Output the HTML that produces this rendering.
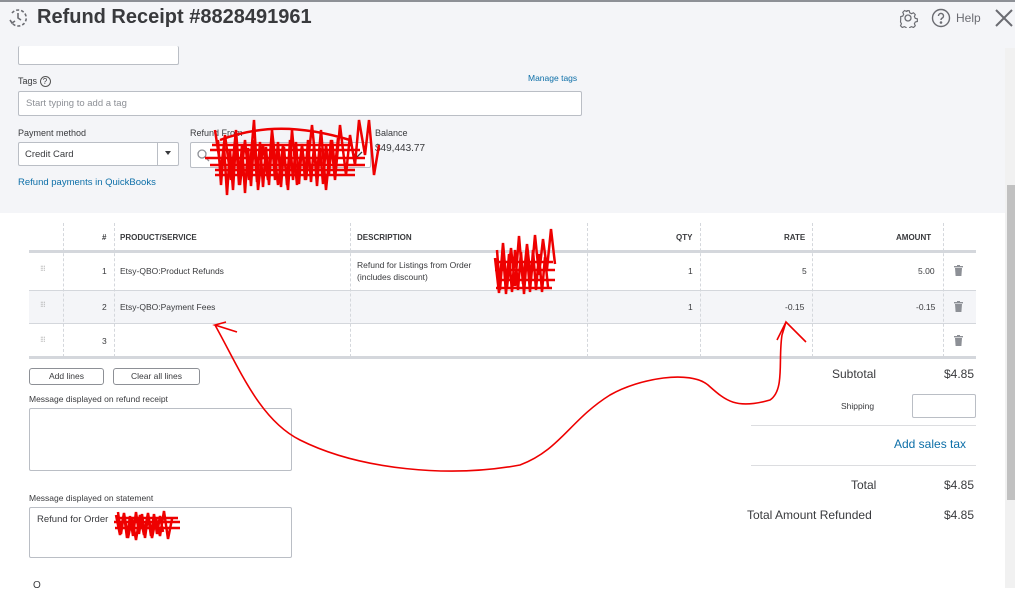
<!DOCTYPE html>
<html><head><meta charset="utf-8"><style>
*{box-sizing:border-box;margin:0;padding:0}
body{width:1015px;height:588px;overflow:hidden;background:#fff;font-family:"Liberation Sans",Arial,sans-serif;color:#393a3d;position:relative}
.a{position:absolute}
.top{left:0;top:0;width:1015px;height:213px;background:#f4f5f8;border-top:2px solid #8d9096}
.inp{background:#fff;border:1px solid #babec5;border-radius:2px}
.lbl{font-size:9px;color:#393a3d}
.hdr{font-size:8px;font-weight:bold;color:#393a3d;top:233px}
.cell{font-size:8.5px;color:#393a3d}
.vl{width:0;border-left:1px dashed #d4d7dc}
.hl{height:0;left:29px;width:947px}
.btn{border:1px solid #8d9096;border-radius:3px;background:#fff;font-size:8.5px;text-align:center;line-height:15px;height:17px;top:368px}
.tr{font-size:12px;color:#393a3d}
.trash{width:9px;height:11px}
</style></head><body>
<div class="a top"></div>
<svg class="a" style="left:8px;top:8px" width="20" height="20" viewBox="0 0 20 20" fill="none" stroke="#6b6c72" stroke-width="1.6"><path d="M4 5 A8 8 0 1 1 4 15" stroke-dasharray="3 2"/><path d="M10 5v5l3 2"/><path d="M2 12l2 3 3-2"/></svg>
<div class="a" style="left:37px;top:6px;font-size:20px;font-weight:bold;color:#393a3d">Refund Receipt #8828491961</div>
<svg class="a" style="left:898px;top:8px" width="20" height="20" viewBox="0 0 20 20" fill="none" stroke="#6b6c72" stroke-width="1.3"><circle cx="10" cy="10" r="3"/><path d="M8.5 2h3l.5 2.3 2 1 2.2-1 2 2-1 2.2 1 2 2.3.5v3l-2.3.5-1 2 1 2.2-2 2-2.2-1-2 1-.5 2.3h-3l-.5-2.3-2-1-2.2 1-2-2 1-2.2-1-2L2 11.5v-3l2.3-.5 1-2-1-2.2 2-2 2.2 1 2-1z" transform="scale(.9) translate(1 1)"/></svg>
<svg class="a" style="left:931px;top:8px" width="20" height="20" viewBox="0 0 20 20" fill="none" stroke="#6b6c72" stroke-width="1.4"><circle cx="10" cy="10" r="8.5"/><path d="M7.5 8a2.5 2.5 0 1 1 3.5 2.2c-.8.4-1 .9-1 1.8"/><circle cx="10" cy="14.5" r=".6" fill="#6b6c72"/></svg>
<div class="a" style="left:956px;top:11px;font-size:12px;color:#6b6c72">Help</div>
<svg class="a" style="left:994px;top:8px" width="20" height="20" viewBox="0 0 20 20" stroke="#6b6c72" stroke-width="2"><path d="M2 2l16 16M18 2L2 18"/></svg>
<div class="a" style="left:1005px;top:48px;width:10px;height:540px;background:#f1f1f1"></div>
<div class="a" style="left:1007px;top:185px;width:8px;height:315px;background:#c1c1c1"></div>
<div class="a inp" style="left:18px;top:46px;width:161px;height:19px;border-top:none"></div>
<div class="a lbl" style="left:18px;top:76px">Tags <span style="display:inline-block;width:11px;height:11px;border:1px solid #555;border-radius:50%;font-size:8px;text-align:center;line-height:9px">?</span></div>
<div class="a" style="left:528px;top:73px;font-size:8.5px;color:#0d6fa8">Manage tags</div>
<div class="a inp" style="left:18px;top:91px;width:564px;height:25px;font-size:9.5px;color:#8d9096;padding:6px 7px">Start typing to add a tag</div>
<div class="a lbl" style="left:18px;top:128px">Payment method</div>
<div class="a inp" style="left:18px;top:142px;width:161px;height:24px;font-size:9.5px;padding:6px 6px">Credit Card</div>
<div class="a" style="left:157px;top:143px;width:1px;height:22px;background:#babec5"></div>
<div class="a" style="left:165px;top:151px;border:3px solid transparent;border-top:4px solid #393a3d"></div>
<div class="a lbl" style="left:190px;top:128px">Refund From</div>
<div class="a inp" style="left:190px;top:142px;width:181px;height:26px"></div>
<svg class="a" style="left:196px;top:148px" width="14" height="14" fill="none" stroke="#8d9096" stroke-width="1.3"><circle cx="6" cy="6" r="4"/><path d="M9 9l4 4"/></svg>
<svg class="a" style="left:350px;top:150px" width="14" height="10" fill="none" stroke="#393a3d" stroke-width="1.3"><path d="M2 2l5 5 5-5"/></svg>
<div class="a lbl" style="left:375px;top:128px">Balance</div>
<div class="a" style="left:375px;top:143px;font-size:10px;color:#393a3d">$49,443.77</div>
<div class="a" style="left:18px;top:177px;font-size:9.5px;color:#0d6fa8">Refund payments in QuickBooks</div>
<div class="a hdr" style="left:102px">#</div>
<div class="a hdr" style="left:120px">PRODUCT/SERVICE</div>
<div class="a hdr" style="left:357px">DESCRIPTION</div>
<div class="a hdr" style="left:676px">QTY</div>
<div class="a hdr" style="left:784px">RATE</div>
<div class="a hdr" style="left:896px">AMOUNT</div>
<div class="a" style="left:29px;top:291px;width:947px;height:32px;background:#f4f5f8"></div>
<div class="a hl" style="top:250px;border-top:3px solid #d4d7dc"></div>
<div class="a hl" style="top:290px;border-top:1px solid #d4d7dc"></div>
<div class="a hl" style="top:323px;border-top:1px solid #d4d7dc"></div>
<div class="a hl" style="top:356px;border-top:3px solid #d4d7dc"></div>
<div class="a vl" style="left:63px;top:223px;height:134px"></div>
<div class="a vl" style="left:114px;top:223px;height:134px"></div>
<div class="a vl" style="left:350px;top:223px;height:134px"></div>
<div class="a vl" style="left:587px;top:223px;height:134px"></div>
<div class="a vl" style="left:700px;top:223px;height:134px"></div>
<div class="a vl" style="left:812px;top:223px;height:134px"></div>
<div class="a vl" style="left:943px;top:223px;height:134px"></div>
<div class="a cell" style="left:40px;top:264px;color:#aaa;font-size:8px;letter-spacing:-1px">⁝⁝⁝</div>
<div class="a cell" style="left:40px;top:300px;color:#aaa;font-size:8px;letter-spacing:-1px">⁝⁝⁝</div>
<div class="a cell" style="left:40px;top:335px;color:#aaa;font-size:8px;letter-spacing:-1px">⁝⁝⁝</div>
<div class="a cell" style="left:102px;top:266px">1</div>
<div class="a cell" style="left:120px;top:266px">Etsy-QBO:Product Refunds</div>
<div class="a cell" style="left:357px;top:259px;line-height:12px">Refund for Listings from Order<br>(includes discount)</div>
<div class="a cell" style="left:688px;top:266px">1</div>
<div class="a cell" style="left:802px;top:266px">5</div>
<div class="a cell" style="left:918px;top:266px">5.00</div>
<div class="a cell" style="left:102px;top:302px">2</div>
<div class="a cell" style="left:120px;top:302px">Etsy-QBO:Payment Fees</div>
<div class="a cell" style="left:688px;top:302px">1</div>
<div class="a cell" style="left:785px;top:302px">-0.15</div>
<div class="a cell" style="left:916px;top:302px">-0.15</div>
<div class="a cell" style="left:102px;top:336px">3</div>
<svg class="a trash" style="left:954px;top:265px" viewBox="0 0 9 11" fill="#8d9096"><rect x="0" y="1" width="9" height="1.4"/><rect x="3" y="0" width="3" height="1.2"/><path d="M1 3h7l-.6 8H1.6z"/></svg>
<svg class="a trash" style="left:954px;top:301px" viewBox="0 0 9 11" fill="#8d9096"><rect x="0" y="1" width="9" height="1.4"/><rect x="3" y="0" width="3" height="1.2"/><path d="M1 3h7l-.6 8H1.6z"/></svg>
<svg class="a trash" style="left:954px;top:335px" viewBox="0 0 9 11" fill="#8d9096"><rect x="0" y="1" width="9" height="1.4"/><rect x="3" y="0" width="3" height="1.2"/><path d="M1 3h7l-.6 8H1.6z"/></svg>
<div class="a btn" style="left:29px;width:75px">Add lines</div>
<div class="a btn" style="left:113px;width:87px">Clear all lines</div>
<div class="a lbl" style="left:29px;top:394px;font-size:8.5px">Message displayed on refund receipt</div>
<div class="a inp" style="left:29px;top:408px;width:263px;height:63px"></div>
<div class="a lbl" style="left:29px;top:493px;font-size:8.5px">Message displayed on statement</div>
<div class="a inp" style="left:29px;top:507px;width:263px;height:51px;font-size:9.5px;padding:6px 7px">Refund for Order</div>
<div class="a" style="left:33px;top:580px;font-size:10px">O</div>
<div class="a tr" style="left:832px;top:367px">Subtotal</div>
<div class="a tr" style="left:944px;top:367px">$4.85</div>
<div class="a" style="left:841px;top:401px;font-size:8.5px">Shipping</div>
<div class="a inp" style="left:912px;top:394px;width:64px;height:24px"></div>
<div class="a" style="left:751px;top:425px;width:225px;height:1px;background:#dcdde0"></div>
<div class="a" style="left:894px;top:437px;font-size:12px;color:#0d6fa8">Add sales tax</div>
<div class="a" style="left:751px;top:465px;width:225px;height:1px;background:#dcdde0"></div>
<div class="a tr" style="left:851px;top:478px">Total</div>
<div class="a tr" style="left:944px;top:508px">$4.85</div>
<div class="a tr" style="left:944px;top:478px">$4.85</div>
<div class="a tr" style="left:747px;top:508px">Total Amount Refunded</div>
<svg class="a" style="left:0;top:0" width="1015" height="588" fill="none" stroke="#e00" stroke-width="1.6">
<path d="M237 332L215 325L226 322M215 325C240 370 260 420 300 440C360 470 450 478 520 465C560 450 570 420 610 395C640 378 690 370 708 385C725 400 735 410 770 400C785 390 778 360 782 335L786 322L806 342M786 322L777 340"/>
<g stroke-width="2.5">
<path d="M215 130l6 40 4-35 6 45 5-50 4 55 5-45 4 40 5-60 4 70 5-45 5 35 4-50 6 55 5-40 5 45 4-60 5 55 5-40 4 35 6-55 5 50 4-45 5 60 5-50 4 40 5-55 6 50 4-40 5 30 4-45 6 35 4-35 5 55 5-30"/>
<path d="M218 140l3 45 3-40 3 50 3-45 3 40 3-50 3 45 3-40 3 48 3-45 3 38 3-46 3 42 3-40 3 45 3-40 3 38 3-45 3 40 3-38 3 45 3-40 3 38 3-45 3 40 3-38 3 42 3-40 3 36 3-40 3 42 3-36 3 40 3-38 3 36 3-40 3 30 3-34 3 28 3-30"/>
<path d="M205 158h160M210 150h150M210 165h155M220 140c40-15 80-15 130 0M215 175h140M212 145h140M215 170h140"/>
<path d="M495 258l4 35 4-50 4 45 4-40 4 38 4-50 4 48 4-40 4 36 4-45 4 40 4-36 4 30 4-40 4 35M497 250l3 40 3-38 3 42 3-40 3 38 3-42 3 40 3-38 3 42 3-40 3 38 3-42 3 40 3-36 3 38 3-35 3 30M495 270h60M497 280h58M498 262h55M496 288h56"/>
<path d="M116 515l4 20 4-22 4 25 4-20 4 22 4-25 4 20 4-22 4 25 4-20 4 18 4-25 4 28 4-20M118 512l3 22 3-20 3 24 3-22 3 20 3-24 3 22 3-20 3 24 3-22 3 20 3-22 3 20 3-18 3 16M114 522h66M115 528h65M116 518h62"/>
</g>
</svg>
</body></html>
